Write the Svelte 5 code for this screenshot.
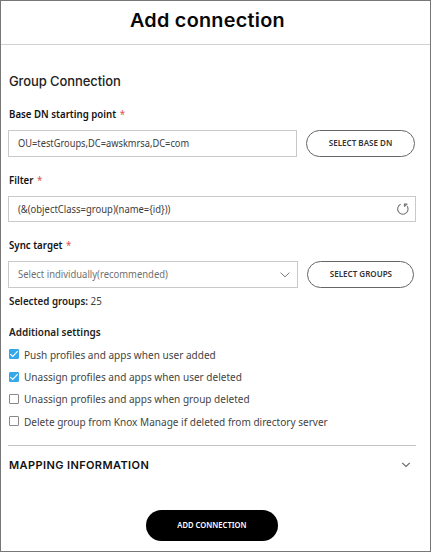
<script>
  let options = $state([
    { text: 'Push profiles and apps when user added', checked: true },
    { text: 'Unassign profiles and apps when user deleted', checked: true },
    { text: 'Unassign profiles and apps when group deleted', checked: false },
    { text: 'Delete group from Knox Manage if deleted from directory server', checked: false }
  ]);
</script>

<main class="dialog">
  <header><h1>Add connection</h1></header>
  <div class="body">
    <h2>Group Connection</h2>

    <div class="label"><span>Base DN starting point</span> <i>*</i></div>
    <div class="row">
      <div class="field short"><span class="v1">OU=testGroups,DC=awskmrsa,DC=com</span></div>
      <button class="pill dn"><span>SELECT BASE DN</span></button>
    </div>

    <div class="label"><span>Filter</span> <i>*</i></div>
    <div class="field filter">
      <span class="v2">(&amp;(objectClass=group)(name=&#123;id&#125;))</span>
      <svg class="reset" width="14" height="14" viewBox="0 0 14 14" fill="none" stroke="#777" stroke-width="1.1">
        <path d="M4.6 2.3A5.2 5.2 0 1 0 11.1 4" />
        <path d="M8.2 2.2H11.4L8.7 5Z" fill="#777" stroke="none" />
        <path d="M8.4 4.8V2.1h3" />
      </svg>
    </div>

    <div class="label"><span>Sync target</span> <i>*</i></div>
    <div class="row">
      <div class="field short select">
        <span class="v3">Select individually(recommended)</span>
        <svg width="10" height="6" viewBox="0 0 10 6" fill="none" stroke="#777"><path d="M.6.7 5 4.8 9.4.7" /></svg>
      </div>
      <button class="pill gr"><span>SELECT GROUPS</span></button>
    </div>
    <p class="selected"><b>Selected groups:</b> 25</p>

    <h3>Additional settings</h3>
    <ul>
      {#each options as option}
        <li>
          <button class="box" class:checked={option.checked} role="checkbox" aria-checked={option.checked} aria-label={option.text} onclick={() => (option.checked = !option.checked)}>
            {#if option.checked}
              <svg width="10" height="10" viewBox="0 0 10 10" fill="none" stroke="#fff" stroke-width="1.2"><path d="M1.3 5.1 3.8 7.5 8.7 2.2" /></svg>
            {/if}
          </button>
          <span class="opt">{option.text}</span>
        </li>
      {/each}
    </ul>

    <section class="mapping">
      <h4>MAPPING INFORMATION</h4>
      <svg width="10" height="6" viewBox="0 0 10 6" fill="none" stroke="#666" stroke-width="1.1"><path d="M1.2.8 5 4.5 8.8.8" /></svg>
    </section>
    <footer><button class="add"><span>ADD CONNECTION</span></button></footer>
  </div>
</main>

<style>
  .dialog {
    box-sizing: border-box;
    width: 431px;
    height: 552px;
    border: 1px solid #777;
    background: #fff;
    overflow: hidden;
    font-family: "Noto Sans", "Open Sans", sans-serif;
    font-size: 11px;
    color: #444;
  }
  h1, h2, h3, h4, p, ul { margin: 0; padding: 0; font-weight: 600; }
  button { font-family: inherit; padding: 0; box-sizing: border-box; }
  span { white-space: nowrap; }
  header {
    box-sizing: border-box;
    height: 44px;
    border-bottom: 1px solid #d2d2d2;
  }
  h1 {
    font: 600 18.5px/38px "Inter", sans-serif;
    letter-spacing: 0.25px;
    color: #080808;
    padding-left: 129px;
    transform: scaleX(1.07);
    transform-origin: 129px center;
  }
  .body { padding: 0 15px 0 7px; }
  h2 {
    font: 500 13px/20px "Inter", sans-serif;
    letter-spacing: -0.1px;
    color: #222;
    padding: 26px 0 0 1px;
  }
  .label, .selected, h3, .field span, .opt { transform-origin: left center; }
  .label {
    height: 16px;
    line-height: 16px;
    margin: 15px 0 8px 1px;
    font-weight: 600;
    color: #111;
    display: flex;
    gap: 4px;
    transform: scaleX(0.88);
  }
  .label i { font-style: normal; font-weight: 400; color: #d9554f; }
  .row { display: flex; gap: 9px; }
  .field {
    box-sizing: border-box;
    width: 408px;
    height: 27px;
    border: 1px solid #c9c9c9;
    padding: 0 5px 0 9px;
    display: flex;
    align-items: center;
    justify-content: space-between;
    font-size: 10.5px;
    color: #3c3c3c;
  }
  .field span { padding-bottom: 1px; }
  .field.filter { height: 26px; }
  .short { width: 290px; padding-right: 7px; }
  .select { color: #707070; }
  .v1 { transform: scaleX(0.883); }
  .v2, .v3 { transform: scaleX(0.9); }
  .pill {
    height: 27px;
    border: 1px solid #666;
    border-radius: 14px;
    background: #fff;
    color: #333;
    font-size: 9px;
    font-weight: 600;
  }
  .pill span { display: inline-block; transform: scaleX(0.893); padding-bottom: 2px; }
  .dn { width: 109px; }
  .gr { width: 107px; }
  .selected {
    height: 16px;
    line-height: 16px;
    margin: 5px 0 0 1px;
    font-weight: 400;
    transform: scaleX(0.89);
  }
  .selected b { font-weight: 600; color: #222; }
  h3 { font-size: 11px; line-height: 16px; margin: 15px 0 0 1px; color: #222; transform: scaleX(0.905); }
  ul { list-style: none; margin: 3px 0 0 1px; font-weight: 400; }
  li { height: 22.4px; display: flex; align-items: center; gap: 5px; }
  .opt { transform: scaleX(0.913); }
  .box {
    width: 10px;
    height: 10px;
    border: 1px solid #888;
    border-radius: 1px;
    background: #fff;
    display: flex;
    align-items: center;
    justify-content: center;
    flex: none;
  }
  .box svg { flex: none; }
  .checked { border-color: #35a7ea; background: #35a7ea; }
  .mapping {
    width: 408px;
    box-sizing: border-box;
    border-top: 1px solid #c4c4c4;
    margin-top: 12px;
    height: 39px;
    padding: 0 5px 0 1px;
    display: flex;
    align-items: center;
    justify-content: space-between;
  }
  h4 { font: 600 11px/20px "Inter", sans-serif; letter-spacing: 0.4px; color: #111; }
  footer { padding: 26px 0 0 138px; }
  .add {
    display: block;
    width: 132px;
    height: 31px;
    border: 0;
    border-radius: 16px;
    background: #000;
    color: #fff;
    font-size: 9px;
    font-weight: 600;
  }
  .add span { display: inline-block; transform: scaleX(0.845); padding-bottom: 1px; }
</style>
